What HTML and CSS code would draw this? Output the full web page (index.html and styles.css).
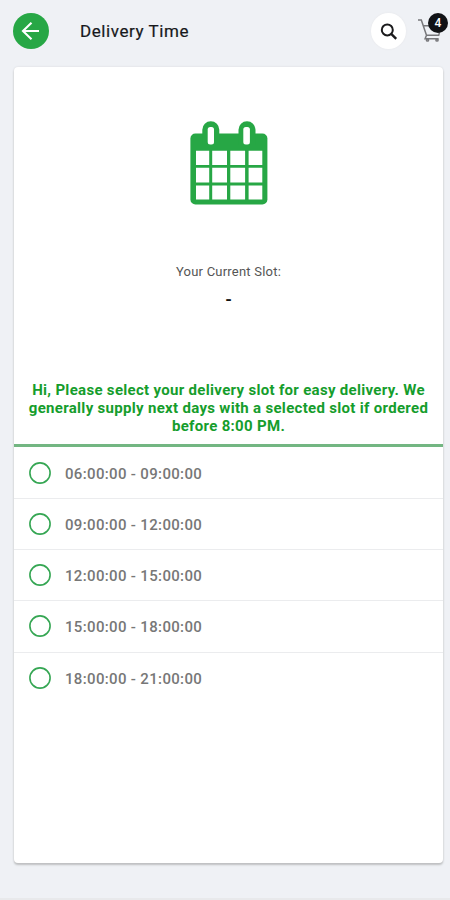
FILE: index.html
```html
<!DOCTYPE html>
<html lang="en">
<head>
<meta charset="utf-8">
<title>Delivery Time</title>
<link rel="stylesheet" href="styles.css">
</head>
<body>
<header class="topbar">
  <button class="back" aria-label="Back">
    <svg width="36" height="36" viewBox="0 0 36 36" fill="none" stroke="#fff" stroke-width="2.1"><path d="M26 18H10M18.5 9.8L10 18l8.5 8.2"/></svg>
  </button>
  <h1 class="title">Delivery Time</h1>
  <button class="search" aria-label="Search">
    <svg width="35" height="36" viewBox="0 0 35 36" fill="none" stroke="#1b1b1d"><circle cx="16.3" cy="16.9" r="5.5" stroke-width="2"/><path d="M20.2 20.8l5 5" stroke-width="2.4"/></svg>
  </button>
  <div class="cart">
    <svg width="24" height="26" viewBox="0 0 24 26" fill="none" stroke="#77777a" stroke-width="1.5"><path d="M0 2h3.3l5.2 15.3h12.2l2-7M5.2 7.7h16.8M8.5 17.3l-1.4 3.4h13.5"/><circle cx="9.5" cy="22" r="1.1"/><circle cx="19" cy="22" r="1.1"/></svg>
    <span class="badge">4</span>
  </div>
</header>
<main class="card">
  <section class="current">
    <svg class="calendar" width="78" height="84" viewBox="20 11 78 84">
      <rect x="20.4" y="23.5" width="77" height="71" rx="5" fill="#27a745"/>
      <path d="M32.3 35V19.8a8.5 8.5 0 0 1 17 0V35zM68.5 35V19.8a8.5 8.5 0 0 1 17 0V35z" fill="#27a745"/>
      <g fill="#fff">
        <rect x="37.7" y="17" width="6.3" height="17.5" rx="2.5"/><rect x="73.3" y="17" width="6.6" height="17.5" rx="2.5"/>
        <path d="M26 40.7h13.2V55H26zM42.2 40.7H57V55H42.2zM60.3 40.7h14.8V55H60.3zM78.6 40.7h13.7V55H78.6zM26 57.8h13.2v14.7H26zM42.2 57.8H57v14.7H42.2zM60.3 57.8h14.8v14.7H60.3zM78.6 57.8h13.7v14.7H78.6zM26 75.5h13.2v14H26zM42.2 75.5H57v14H42.2zM60.3 75.5h14.8v14H60.3zM78.6 75.5h13.7v14H78.6z"/>
      </g>
    </svg>
    <p class="label">Your Current Slot:</p>
    <p class="value">-</p>
  </section>
  <p class="notice">Hi, Please select your delivery slot for easy delivery. We<br>generally supply next days with a selected slot if ordered<br>before 8:00 PM.</p>
  <ul class="slots">
    <li class="slot"><svg class="radio" viewBox="0 0 22 22"><circle cx="11" cy="11" r="10.1"/></svg><span class="time">06:00:00 - 09:00:00</span></li>
    <li class="slot"><svg class="radio" viewBox="0 0 22 22"><circle cx="11" cy="11" r="10.1"/></svg><span class="time">09:00:00 - 12:00:00</span></li>
    <li class="slot"><svg class="radio" viewBox="0 0 22 22"><circle cx="11" cy="11" r="10.1"/></svg><span class="time">12:00:00 - 15:00:00</span></li>
    <li class="slot"><svg class="radio" viewBox="0 0 22 22"><circle cx="11" cy="11" r="10.1"/></svg><span class="time">15:00:00 - 18:00:00</span></li>
    <li class="slot"><svg class="radio" viewBox="0 0 22 22"><circle cx="11" cy="11" r="10.1"/></svg><span class="time">18:00:00 - 21:00:00</span></li>
  </ul>
</main>
</body>
</html>
```
FILE: styles.css
```css
* { box-sizing: border-box; margin: 0; padding: 0; }
body {
  height: 900px;
  overflow: hidden;
  background: #eff1f5;
  border-bottom: 2px solid #e8e9eb;
  font-family: Roboto, "Liberation Sans", sans-serif;
}
button { border: 0; border-radius: 50%; }
svg { display: block; }
.topbar { display: flex; align-items: center; height: 67px; padding: 0 0 5px 13px; }
.back { width: 36px; height: 36px; background: #27a745; }
.title { flex: 1; margin-left: 31px; font-size: 17px; font-weight: 400; letter-spacing: .57px; color: #17181b; -webkit-text-stroke: .2px; }
.search { width: 35px; height: 36px; margin-right: 12px; background: #fff; box-shadow: 0 0 2px #e4e5e8; }
.cart { position: relative; width: 32px; height: 26px; }
.badge {
  position: absolute; left: 10px; top: -5px;
  width: 20px; height: 20px; border-radius: 50%;
  background: #111215; color: #fff;
  font-size: 12px; font-weight: 500; line-height: 21px; text-align: center;
}
.card {
  width: 429px; height: 796px; margin-left: 14px;
  background: #fff; border-radius: 4px;
  box-shadow: 0 2px 2px #bfc0c2, 0 0 2px #d5d6d9;
}
.current { display: flex; flex-direction: column; align-items: center; height: 314px; padding-top: 54px; }
.label { margin-top: 58px; font-size: 13px; line-height: 18px; letter-spacing: .22px; color: #555; }
.value { margin-top: 8px; font-size: 17px; font-weight: 700; line-height: 20px; color: #111; }
.notice {
  height: 66px;
  border-bottom: 3px solid #73b682;
  color: #159d2c;
  font-size: 15px; font-weight: 700; line-height: 18px; letter-spacing: .31px; text-align: center; white-space: nowrap;
}
.slots { list-style: none; padding-top: .8px; }
.slot { display: flex; align-items: center; height: 51.2px; padding-left: 15px; border-bottom: 1px solid #ebecee; }
.slot:last-child { border-bottom: 0; }
.radio { width: 22px; height: 22px; margin-right: 14px; fill: none; stroke: #35a653; stroke-width: 1.6px; }
.time { padding-top: 2px; color: #777; font-size: 15px; font-weight: 500; letter-spacing: .34px; }
```
